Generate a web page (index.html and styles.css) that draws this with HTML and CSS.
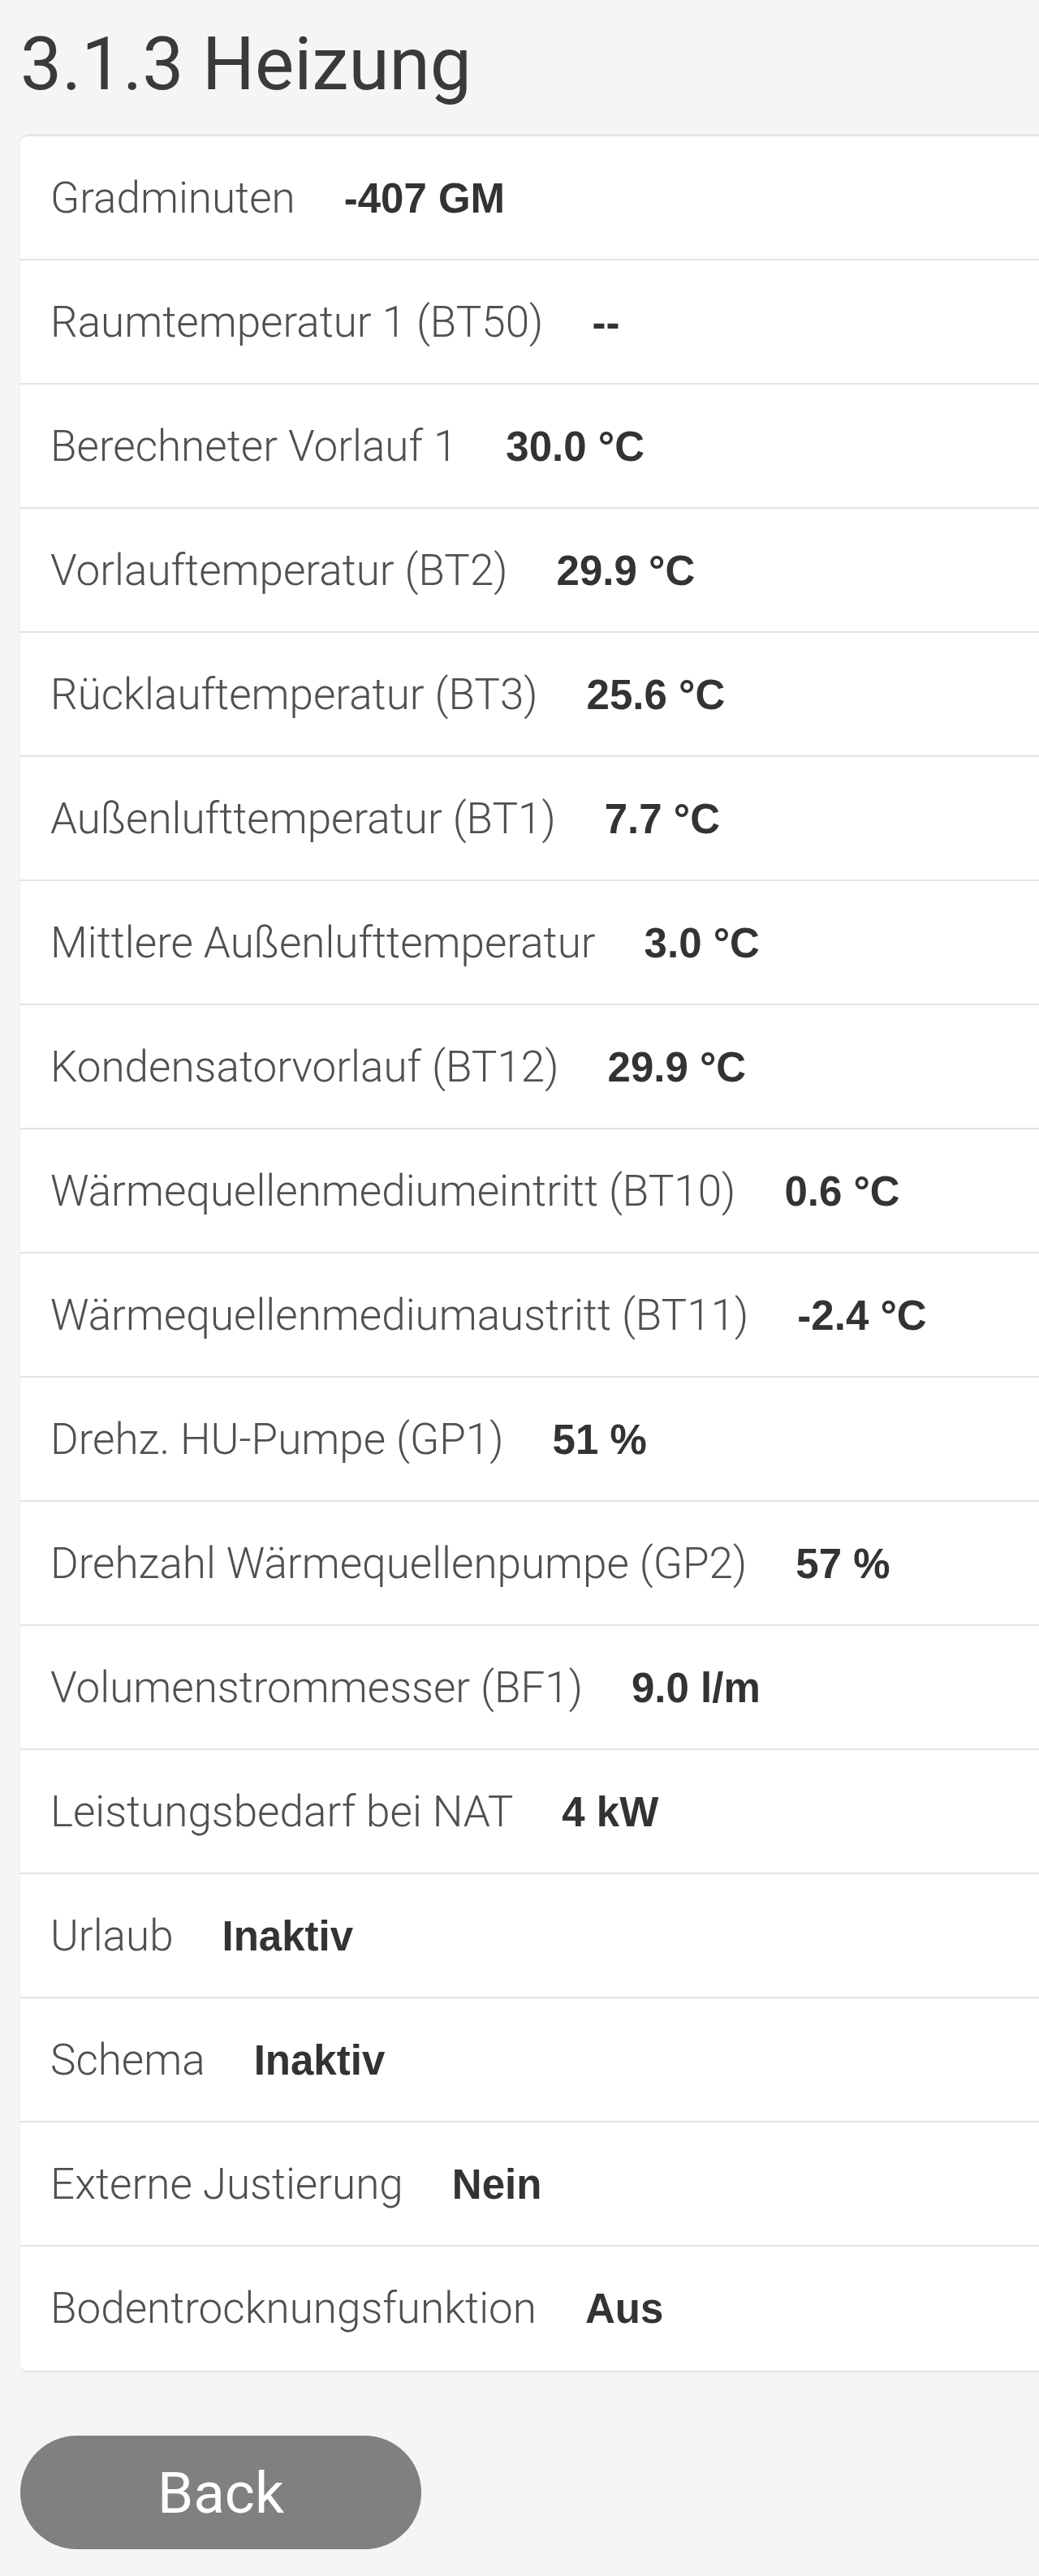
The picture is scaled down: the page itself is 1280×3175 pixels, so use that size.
FILE: index.html
```html
<!DOCTYPE html>
<html lang="de">
<head>
<meta charset="utf-8">
<title>3.1.3 Heizung</title>
<link rel="stylesheet" href="styles.css">
</head>
<body>
<main class="page">
  <h1 class="title">3.1.3 Heizung</h1>
  <section class="card">
    <div class="row"><p class="line"><span class="label">Gradminuten</span><b class="value">-407 GM</b></p></div>
    <div class="row"><p class="line"><span class="label">Raumtemperatur 1 (BT50)</span><b class="value">--</b></p></div>
    <div class="row"><p class="line"><span class="label">Berechneter Vorlauf 1</span><b class="value">30.0 °C</b></p></div>
    <div class="row"><p class="line"><span class="label">Vorlauftemperatur (BT2)</span><b class="value">29.9 °C</b></p></div>
    <div class="row"><p class="line"><span class="label">Rücklauftemperatur (BT3)</span><b class="value">25.6 °C</b></p></div>
    <div class="row"><p class="line"><span class="label">Außenlufttemperatur (BT1)</span><b class="value">7.7 °C</b></p></div>
    <div class="row"><p class="line"><span class="label">Mittlere Außenlufttemperatur</span><b class="value">3.0 °C</b></p></div>
    <div class="row"><p class="line"><span class="label">Kondensatorvorlauf (BT12)</span><b class="value">29.9 °C</b></p></div>
    <div class="row"><p class="line"><span class="label">Wärmequellenmediumeintritt (BT10)</span><b class="value">0.6 °C</b></p></div>
    <div class="row"><p class="line"><span class="label">Wärmequellenmediumaustritt (BT11)</span><b class="value">-2.4 °C</b></p></div>
    <div class="row"><p class="line"><span class="label">Drehz. HU-Pumpe (GP1)</span><b class="value">51 %</b></p></div>
    <div class="row"><p class="line"><span class="label">Drehzahl Wärmequellenpumpe (GP2)</span><b class="value">57 %</b></p></div>
    <div class="row"><p class="line"><span class="label">Volumenstrommesser (BF1)</span><b class="value">9.0 l/m</b></p></div>
    <div class="row"><p class="line"><span class="label">Leistungsbedarf bei NAT</span><b class="value">4 kW</b></p></div>
    <div class="row"><p class="line"><span class="label">Urlaub</span><b class="value">Inaktiv</b></p></div>
    <div class="row"><p class="line"><span class="label">Schema</span><b class="value">Inaktiv</b></p></div>
    <div class="row"><p class="line"><span class="label">Externe Justierung</span><b class="value">Nein</b></p></div>
    <div class="row"><p class="line"><span class="label">Bodentrocknungsfunktion</span><b class="value">Aus</b></p></div>
  </section>
  <button class="back" type="button">Back</button>
</main>
</body>
</html>
```
FILE: styles.css
```css
html, body {
  margin: 0;
  padding: 0;
  overflow-x: hidden;
  background: #f5f5f5;
}

body {
  font-family: Roboto, "Liberation Sans", sans-serif;
  color: #3c3c3c;
}

.page {
  padding: 34px 0 0 25px;
  display: flex;
  flex-direction: column;
  align-items: flex-start;
}

.title {
  margin: 0 0 41px 0;
  font-family: Roboto, sans-serif;
  font-weight: 400;
  font-size: 91px;
  line-height: 91px;
  color: #3a3a3a;
}

.card {
  align-self: stretch;
  margin-right: -60px;
  padding-bottom: 2px;
  background: #ffffff;
  border-top: 2px solid #e3e3e3;
  border-bottom: 2px solid #e3e3e3;
  border-radius: 10px;
  box-shadow: 0 0 3px rgba(0, 0, 0, 0.06);
}

.row {
  height: 151px;
  display: flex;
  align-items: center;
  padding-left: 37px;
  border-bottom: 2px solid #e3e3e3;
}

.row:last-child {
  border-bottom: none;
}

.line {
  margin: 0;
  font-size: 53px;
  white-space: nowrap;
}

.label {
  font-family: Roboto, sans-serif;
  font-weight: 300;
  color: #505050;
}

.value {
  margin-left: 60px;
  font-family: "Liberation Sans", Arial, sans-serif;
  font-weight: 700;
  font-size: 51px;
  color: #333333;
}

.back {
  margin-top: 78px;
  width: 494px;
  height: 140px;
  border: none;
  border-radius: 70px;
  background: #808080;
  color: #ffffff;
  font-family: Roboto, sans-serif;
  font-weight: 400;
  font-size: 71px;
  padding: 0;
}
```
